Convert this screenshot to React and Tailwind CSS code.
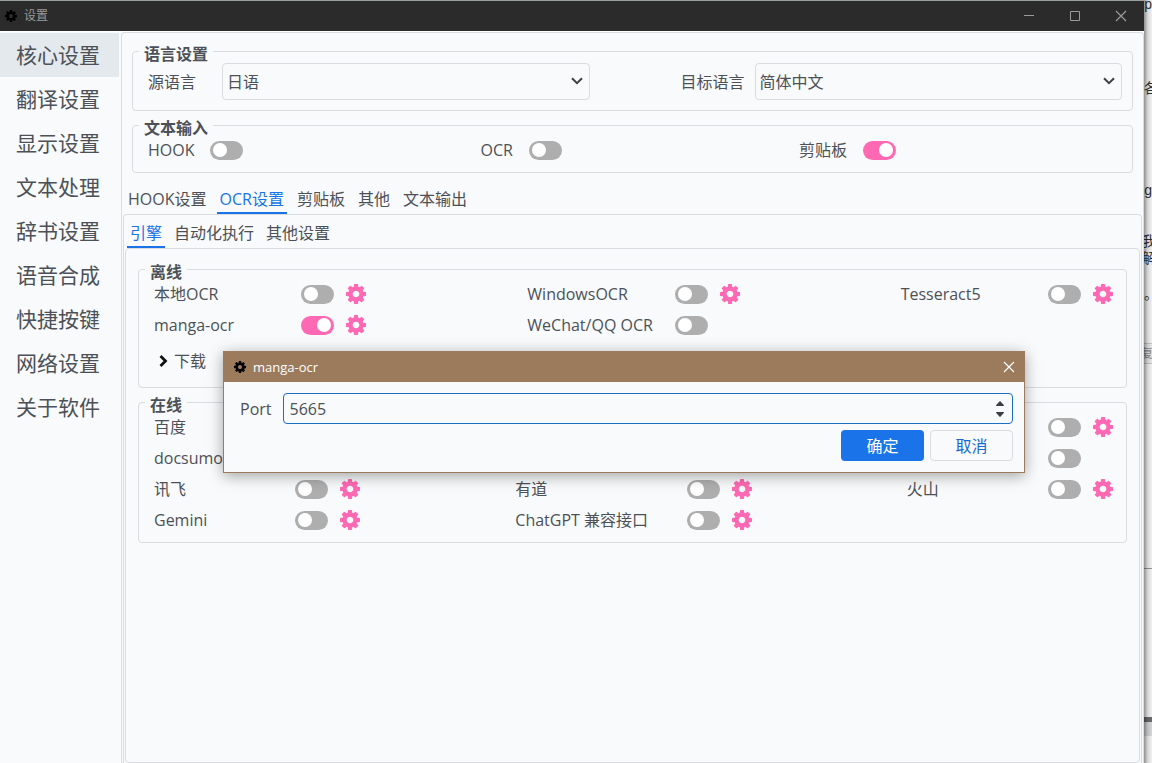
import React from "react";

const GEAR =
  "M1152 896q0-106-75-181t-181-75-181 75-75 181 75 181 181 75 181-75 75-181zm512-109v222q0 12-8 23t-20 13l-185 28q-19 54-39 91 35 50 107 138 10 12 10 25t-9 23q-27 37-99 108t-94 71q-12 0-26-9l-138-108q-44 23-91 38-16 136-29 186-7 28-36 28h-222q-14 0-24.5-8.5t-11.5-21.5l-28-184q-49-16-90-37l-141 107q-10 9-25 9-14 0-25-11-126-114-165-168-7-10-7-23 0-12 8-23 15-21 51-66.5t54-70.5q-27-50-41-99l-183-27q-13-2-21-12.5t-8-23.5v-222q0-12 8-23t19-13l186-28q14-46 39-92-40-57-107-138-10-12-10-24 0-10 9-23 26-36 98.5-107.5t94.5-71.5q13 0 26 10l138 107q44-23 91-38 16-136 29-186 7-28 36-28h222q14 0 24.5 8.5t11.5 21.5l28 184q49 16 90 37l142-107q9-9 24-9 13 0 25 10 129 119 165 170 7 8 7 22 0 12-8 23-15 21-51 66.5t-54 70.5q26 50 41 98l183 28q13 2 21 12.5t8 23.5z";

function Gear({ className }) {
  return (
    <svg viewBox="128 128 1536 1536" className={className} fill="currentColor" aria-hidden="true">
      <path d={GEAR} />
    </svg>
  );
}

function Cross({ className }) {
  return (
    <svg viewBox="0 0 12 12" className={className} fill="none" stroke="currentColor" strokeWidth="1.2" aria-hidden="true">
      <path d="M1 1l10 10M11 1L1 11" />
    </svg>
  );
}

function Toggle({ id, on, label }) {
  return (
    <input
      id={id}
      type="checkbox"
      defaultChecked={on}
      aria-label={label}
      className="flex h-[19px] w-[33px] shrink-0 appearance-none items-center rounded-full bg-[#aeaeae] px-[3px] before:size-[14px] before:rounded-full before:bg-white checked:justify-end checked:bg-[#ff69b4]"
    />
  );
}

function Group({ title, className, children }) {
  return (
    <fieldset className={"min-w-0 rounded-[4px] border border-[#dadce0] " + className}>
      <legend className="px-[5px] pt-[6px] font-bold leading-4">{title}</legend>
      {children}
    </fieldset>
  );
}

function LanguageField({ id, label, value }) {
  return (
    <div className="flex items-center gap-[10px]">
      <label htmlFor={id} className="w-16 shrink-0">{label}</label>
      <div className="relative min-w-0 flex-1">
        <select id={id} defaultValue={value} className="h-[37px] w-full appearance-none rounded-[4px] border border-[#dadce0] bg-transparent px-1">
          <option>{value}</option>
        </select>
        <svg viewBox="0 0 12 8" className="pointer-events-none absolute top-[14px] right-[7px] h-2 w-3" fill="none" stroke="#3c4043" strokeWidth="2" aria-hidden="true">
          <path d="M1 1.2l5 5 5-5" />
        </svg>
      </div>
    </div>
  );
}

function InputSource({ id, label, on }) {
  return (
    <div className="flex h-7 flex-auto items-center gap-4">
      <label htmlFor={id}>{label}</label>
      <Toggle id={id} on={on} />
    </div>
  );
}

function Engine({ id, label, on, gear }) {
  return (
    <div className="flex h-7 items-center">
      {label && <label htmlFor={id} className="whitespace-nowrap">{label}</label>}
      <div className="ml-auto flex items-center gap-3">
        <Toggle id={id} on={on} label={label ? undefined : "引擎"} />
        {gear ? (
          <button type="button" aria-label="设置" className="text-[#ff69b4]">
            <Gear className="size-5" />
          </button>
        ) : (
          <span className="w-5" />
        )}
      </div>
    </div>
  );
}

function Tabs({ items, active, className }) {
  return (
    <div role="tablist" className={"flex " + className}>
      {items.map((t) => (
        <button
          key={t}
          type="button"
          role="tab"
          aria-selected={t === active}
          className="border-b-2 border-transparent px-[3px] pt-[2px] leading-[26px] aria-selected:border-[#1a73e8] aria-selected:text-[#1a73e8]"
        >
          {t}
        </button>
      ))}
    </div>
  );
}

const NAV = ["核心设置", "翻译设置", "显示设置", "文本处理", "辞书设置", "语音合成", "快捷按键", "网络设置", "关于软件"];

const OFFLINE = [
  { id: "local", label: "本地OCR", gear: true },
  { id: "windows", label: "WindowsOCR", gear: true },
  { id: "tesseract", label: "Tesseract5", gear: true },
  { id: "manga", label: "manga-ocr", on: true, gear: true },
  { id: "wechat", label: "WeChat/QQ OCR" },
];

const ONLINE = [
  { id: "baidu", label: "百度", gear: true },
  null,
  { id: "online3", gear: true },
  { id: "docsumo", label: "docsumo", gear: true },
  null,
  { id: "online6" },
  { id: "xunfei", label: "讯飞", gear: true },
  { id: "youdao", label: "有道", gear: true },
  { id: "volcano", label: "火山", gear: true },
  { id: "gemini", label: "Gemini", gear: true },
  { id: "chatgpt", label: "ChatGPT 兼容接口", gear: true },
];

function TitleBar() {
  return (
    <header className="flex h-[31px] shrink-0 items-center border-t border-[#9aa09c] bg-[#2b2b2b] pl-[5px] text-[#9b9b9b]">
      <Gear className="size-3 text-black" />
      <h1 className="ml-[7px] flex-1 text-xs">设置</h1>
      <button type="button" aria-label="最小化" className="flex h-full w-[46px] items-center justify-center">
        <svg viewBox="0 0 10 10" className="size-[10px]" stroke="currentColor" aria-hidden="true"><path d="M0 4.5h10" /></svg>
      </button>
      <button type="button" aria-label="最大化" className="flex h-full w-[46px] items-center justify-center">
        <svg viewBox="0 0 10 10" className="size-[10px]" fill="none" stroke="currentColor" aria-hidden="true"><path d="M.5.5h9v9h-9z" /></svg>
      </button>
      <button type="button" aria-label="关闭" className="flex h-full w-[46px] items-center justify-center">
        <Cross className="size-3" />
      </button>
    </header>
  );
}

function PortDialog() {
  return (
    <section
      role="dialog"
      aria-label="manga-ocr"
      className="absolute top-[351px] right-[119px] left-[223px] border border-[#9c7a5c] bg-[#f8fafb] shadow-[0_3px_14px_rgba(0,0,0,0.35)]"
    >
      <header className="flex h-[30px] items-center bg-[#9c7a5c] pl-[10px] text-white">
        <Gear className="size-3 text-black" />
        <h2 className="ml-[7px] flex-1 text-[13px]">manga-ocr</h2>
        <button type="button" aria-label="关闭" className="flex h-full w-[30px] items-center justify-center">
          <Cross className="size-3" />
        </button>
      </header>
      <form className="flex flex-col gap-[6px] py-[11px] pr-[11px] pl-4">
        <div className="flex items-center gap-[11px]">
          <label htmlFor="port">Port</label>
          <div className="flex h-[31px] min-w-0 flex-1 items-center rounded-[4px] border border-[#1a6fc4] pr-2">
            <input
              id="port"
              type="number"
              defaultValue="5665"
              className="min-w-0 flex-1 bg-transparent pl-[6px] outline-none [appearance:textfield] [&::-webkit-inner-spin-button]:appearance-none"
            />
            <div className="flex flex-col gap-[6px] text-[#3c4043]">
              <button type="button" aria-label="增加" className="block">
                <svg viewBox="0 0 8 5" className="h-[5px] w-2" fill="currentColor" aria-hidden="true"><path d="M0 4.2L3.4.6q.6-.6 1.2 0L8 4.2q0 .8-.6.8H.6Q0 5 0 4.2z" /></svg>
              </button>
              <button type="button" aria-label="减少" className="block">
                <svg viewBox="0 0 8 5" className="h-[5px] w-2" fill="currentColor" aria-hidden="true"><path d="M0 .8L3.4 4.4q.6.6 1.2 0L8 .8Q8 0 7.4 0H.6Q0 0 0 .8z" /></svg>
              </button>
            </div>
          </div>
        </div>
        <div className="flex justify-end gap-[6px]">
          <button type="button" className="h-[31px] w-[83px] rounded-[4px] bg-[#1a73e8] text-white">确定</button>
          <button type="button" className="h-[31px] w-[83px] rounded-[4px] border border-[#dadce0] text-[#1967d2]">取消</button>
        </div>
      </form>
    </section>
  );
}

function Backdrop() {
  return (
    <div aria-hidden="true" className="relative w-2 shrink-0 overflow-hidden bg-[#f1f1f1] font-['Liberation_Sans','Noto_Sans_CJK_SC',sans-serif] text-sm leading-4 whitespace-nowrap text-[#333]">
      <span className="absolute top-[-4px] right-0">np</span>
      <span className="absolute top-[80px] left-0">各</span>
      <span className="absolute top-[182px] right-0">ng</span>
      <span className="absolute top-[233px] right-[-4px]">我</span>
      <span className="absolute top-[250px] right-[-4px]">解</span>
      <span className="absolute top-[286px] left-0">。</span>
      <span className="absolute top-[343px] -left-1 h-[21px] w-6 border border-[#c4c4c4] bg-[#e6e6e6] text-xs leading-5 text-[#888]">复</span>
      <span className="absolute top-[568px] h-px w-full bg-[#999]" />
      <span className="absolute top-[717px] h-[5px] w-full bg-[#6b6b6e]" />
      <span className="absolute top-[722px] h-[14px] w-full bg-[#d5d6d8]" />
      <span className="absolute inset-0 bg-linear-to-r from-black/40 via-black/10 to-transparent" />
    </div>
  );
}

export default function App() {
  return (
    <div className="flex min-h-screen font-['Open_Sans','Noto_Sans_CJK_SC',sans-serif] text-base leading-6 text-[#4d5157]">
      <div className="relative flex min-w-0 flex-1 flex-col bg-[#f8fafb]">
        <TitleBar />
        <div className="flex flex-1 border-t border-white">
          <nav className="w-[119px] shrink-0 pt-px">
            {NAV.map((n, i) => (
              <button
                key={n}
                type="button"
                aria-current={i === 0 ? "page" : undefined}
                className="block h-11 w-full pl-4 text-left text-[21px] aria-[current=page]:bg-[#e4e9ed]"
              >
                {n}
              </button>
            ))}
          </nav>
          <main className="ml-[2px] flex min-w-0 flex-1 flex-col rounded-t-[4px] border border-b-0 border-[#dadce0] px-px">
            <div className="flex flex-col gap-[3px] px-[9px] pt-[7px]">
              <Group title="语言设置" className="px-[10px] pb-[10px] pl-[15px] [&>legend]:-ml-[9px]">
                <div className="grid grid-cols-2 gap-[91px] pt-px">
                  <LanguageField id="src" label="源语言" value="日语" />
                  <LanguageField id="dst" label="目标语言" value="简体中文" />
                </div>
              </Group>
              <Group title="文本输入" className="px-[10px] pb-2 pl-[15px] [&>legend]:-ml-[9px]">
                <div className="flex gap-[11px]">
                  <InputSource id="hook" label="HOOK" />
                  <InputSource id="ocr" label="OCR" />
                  <InputSource id="clip" label="剪贴板" on />
                </div>
              </Group>
            </div>
            <Tabs items={["HOOK设置", "OCR设置", "剪贴板", "其他", "文本输出"]} active="OCR设置" className="mt-[11px] gap-[7px] px-[2px]" />
            <div className="flex flex-1 flex-col rounded-t-[4px] border border-b-0 border-[#dadce0] px-px">
              <Tabs items={["引擎", "自动化执行", "其他设置"]} active="引擎" className="mt-[3px] gap-[6px] px-[2px]" />
              <div className="flex flex-1 flex-col gap-[3px] rounded-[4px] border border-[#dadce0] px-3 pt-[9px]">
                <Group title="离线" className="px-[13px] pb-3 pl-[15px] [&>legend]:-ml-[9px]">
                  <div className="grid grid-cols-3 gap-x-[161px] gap-y-[3px]">
                    {OFFLINE.map((e) => <Engine key={e.id} {...e} />)}
                  </div>
                  <button type="button" className="mt-2 flex h-7 items-center gap-[6px] pl-[5px]">
                    <svg viewBox="0 0 9 12" className="h-3 w-[9px]" fill="none" stroke="#111" strokeWidth="2.8" aria-hidden="true"><path d="M1.5 1l5 5-5 5" /></svg>
                    下载
                  </button>
                </Group>
                <Group title="在线" className="px-[13px] pb-2 pl-[15px] [&>legend]:-ml-[9px]">
                  <div className="grid grid-cols-[206fr_236fr_206fr] gap-x-[155px] gap-y-[3px]">
                    {ONLINE.map((e, i) => (e ? <Engine key={e.id} {...e} /> : <span key={i} />))}
                  </div>
                </Group>
              </div>
            </div>
          </main>
        </div>
        <PortDialog />
      </div>
      <Backdrop />
    </div>
  );
}
